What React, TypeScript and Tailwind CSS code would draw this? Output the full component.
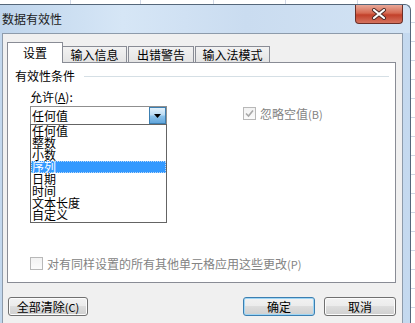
import React from "react";

const items = ["任何值", "整数", "小数", "序列", "日期", "时间", "文本长度", "自定义"];

const Btn = ({ label, w, primary }: { label: React.ReactNode; w: string; primary?: boolean }) => (
    <div
        className={`${w} h-[19px] rounded-[3px] border ${
            primary
                ? "border-[#3c7fb1] shadow-[inset_0_0_0_1px_#9fd6f5]"
                : "border-[#707070] shadow-[inset_0_0_0_1px_#fcfcfc]"
        } bg-[linear-gradient(to_bottom,#f2f2f2_0%,#ebebeb_50%,#dddddd_50%,#cfcfcf_100%)] flex items-center justify-center leading-[12px]`}
    >
        {label}
    </div>
);

const Check = ({ checked }: { checked?: boolean }) => (
    <div className="w-[13px] h-[13px] border border-[#b8b8b8] bg-[linear-gradient(to_bottom,#f2f2f2,#fbfbfb)] flex items-center justify-center shrink-0">
        {checked && (
            <svg width="9" height="9" viewBox="0 0 9 9">
                <path d="M1 4.5 L3.5 7 L8 1.5" fill="none" stroke="#a8a8a8" strokeWidth="1.6" />
            </svg>
        )}
    </div>
);

export default function App() {
    return (
        <div className="w-[415px] h-[323px] overflow-hidden bg-white flex flex-col text-[12px] text-black font-['Noto_Sans_CJK_SC',sans-serif]">
            {/* spreadsheet strip above */}
            <div className="h-[4px] flex shrink-0">
                <div className="w-[71px] border-r border-[#d0d7e5]" />
                <div className="w-[70px] border-r border-[#d0d7e5]" />
                <div className="w-[73px] border-r border-[#d0d7e5]" />
                <div className="w-[72px] border-r border-[#d0d7e5]" />
                <div className="w-[72px] border-r border-[#d0d7e5]" />
                <div className="flex-1" />
            </div>

            <div className="flex flex-1 min-h-0">
                {/* dialog window */}
                <div className="w-[411px] flex flex-col bg-[linear-gradient(to_right,#c2d7ed,#cfe0f2_50%,#c4d9ef)] border-t border-r border-[#55677a] rounded-tr-[6px]">
                    {/* title bar */}
                    <div className="h-[28px] flex items-start shrink-0 bg-[linear-gradient(to_right,#bfd5ec_0%,#d6e6f6_30%,#cadcf0_60%,#d2e3f4_100%)] rounded-tr-[6px]">
                        <div className="pl-[2px] pt-[7px] text-[12px] leading-[14px] text-[#1b1b1b]">数据有效性</div>
                        <div className="ml-auto mr-[7px] w-[48px] h-[19px] rounded-b-[4px] border border-t-0 border-[#6b2f28] bg-[linear-gradient(to_bottom,#e9a898_0%,#d66a52_45%,#c2402a_55%,#d5735f_100%)] flex items-center justify-center">
                            <svg width="16" height="12" viewBox="0 0 16 12">
                                <path d="M3 2 L13 10 M13 2 L3 10" stroke="#4a2a26" strokeWidth="4" strokeLinecap="round" />
                                <path d="M3 2 L13 10 M13 2 L3 10" stroke="#ffffff" strokeWidth="2.2" strokeLinecap="round" />
                            </svg>
                        </div>
                    </div>

                    {/* client area */}
                    <div className="flex-1 ml-[2px] mr-[7px] bg-[#f0f0f0] border-t border-l border-r border-[#8d9bab] pt-[8px] pl-[4px] flex flex-col">
                        {/* tabs */}
                        <div className="flex items-end h-[21px]">
                            <div className="relative z-10 w-[56px] h-[21px] bg-white border border-b-0 border-[#898c95] flex items-center justify-center pb-[1px]">
                                设置
                            </div>
                            <div className="w-[64px] h-[17px] border border-b-0 border-l-0 border-[#898c95] bg-[linear-gradient(to_bottom,#f2f2f2,#e3e3e3)] flex items-center justify-center">
                                输入信息
                            </div>
                            <div className="ml-[1px] w-[66px] h-[17px] border border-b-0 border-[#898c95] bg-[linear-gradient(to_bottom,#f2f2f2,#e3e3e3)] flex items-center justify-center">
                                出错警告
                            </div>
                            <div className="ml-[1px] w-[75px] h-[17px] border border-b-0 border-[#898c95] bg-[linear-gradient(to_bottom,#f2f2f2,#e3e3e3)] flex items-center justify-center">
                                输入法模式
                            </div>
                        </div>

                        {/* tab panel */}
                        <div className="-mt-px w-[389px] h-[221px] bg-white border border-[#898c95] flex flex-col">
                            <div className="flex items-center pt-[7px] pl-[7px] pr-[6px] h-[19px]">
                                <span className="leading-[12px]">有效性条件</span>
                                <div className="flex-1 ml-[9px] h-px bg-[#d5dfe5]" />
                            </div>

                            <div className="pl-[22px] mt-[9px] leading-[12px]">
                                允许(<span className="underline">A</span>):
                            </div>

                            <div className="flex pl-[22px] mt-[3px]">
                                <div className="relative w-[137px]">
                                    <div className="h-[19px] border border-[#8f8f8f] bg-white flex items-center">
                                        <span className="pl-[1px] leading-[12px]">任何值</span>
                                        <div className="ml-auto w-[17px] h-[17px] border border-[#3c7fb1] bg-[linear-gradient(to_bottom,#e3f1fb_0%,#bcdcf3_45%,#8cc2ea_55%,#62a6dc_100%)] flex items-center justify-center">
                                            <svg width="7" height="4" viewBox="0 0 7 4">
                                                <path d="M0 0 H7 L3.5 4 Z" fill="#000" />
                                            </svg>
                                        </div>
                                    </div>
                                    {/* dropdown list */}
                                    <div className="absolute left-0 top-[18px] w-[137px] h-[99px] bg-white border border-[#646464] z-20">
                                        {items.map((it) => (
                                            <div
                                                key={it}
                                                className={`h-[12px] leading-[12px] pl-[1px] ${
                                                    it === "序列" ? "bg-[#3399ff] text-white outline outline-1 outline-dotted outline-[#bcd8f7] -outline-offset-1" : ""
                                                }`}
                                            >
                                                {it}
                                            </div>
                                        ))}
                                    </div>
                                </div>

                                <div className="ml-[76px] flex items-center gap-[4px] h-[13px] mt-[1px] text-[#838383]">
                                    <Check checked />
                                    <span className="leading-[12px]">
                                        忽略空值<span className="text-[11px]">(B)</span>
                                    </span>
                                </div>
                            </div>

                            <div className="mt-auto mb-[12px] pl-[22px] flex items-center gap-[4px] text-[#838383]">
                                <Check />
                                <span className="leading-[12px]">
                                    对有同样设置的所有其他单元格应用这些更改<span className="text-[11px]">(P)</span>
                                </span>
                            </div>
                        </div>

                        {/* buttons */}
                        <div className="flex mt-[14px] pl-[1px]">
                            <Btn
                                w="w-[80px]"
                                label={
                                    <>
                                        全部清除<span className="text-[11px]">(C)</span>
                                    </>
                                }
                            />
                            <div className="ml-[155px]">
                                <Btn w="w-[72px]" label="确定" primary />
                            </div>
                            <div className="ml-[9px]">
                                <Btn w="w-[72px]" label="取消" />
                            </div>
                        </div>
                    </div>
                </div>

                {/* spreadsheet strip at right */}
                <div className="flex-1 bg-[repeating-linear-gradient(to_bottom,#ffffff_0px,#ffffff_18px,#d0d7e5_18px,#d0d7e5_19px)]" />
            </div>
        </div>
    );
}
